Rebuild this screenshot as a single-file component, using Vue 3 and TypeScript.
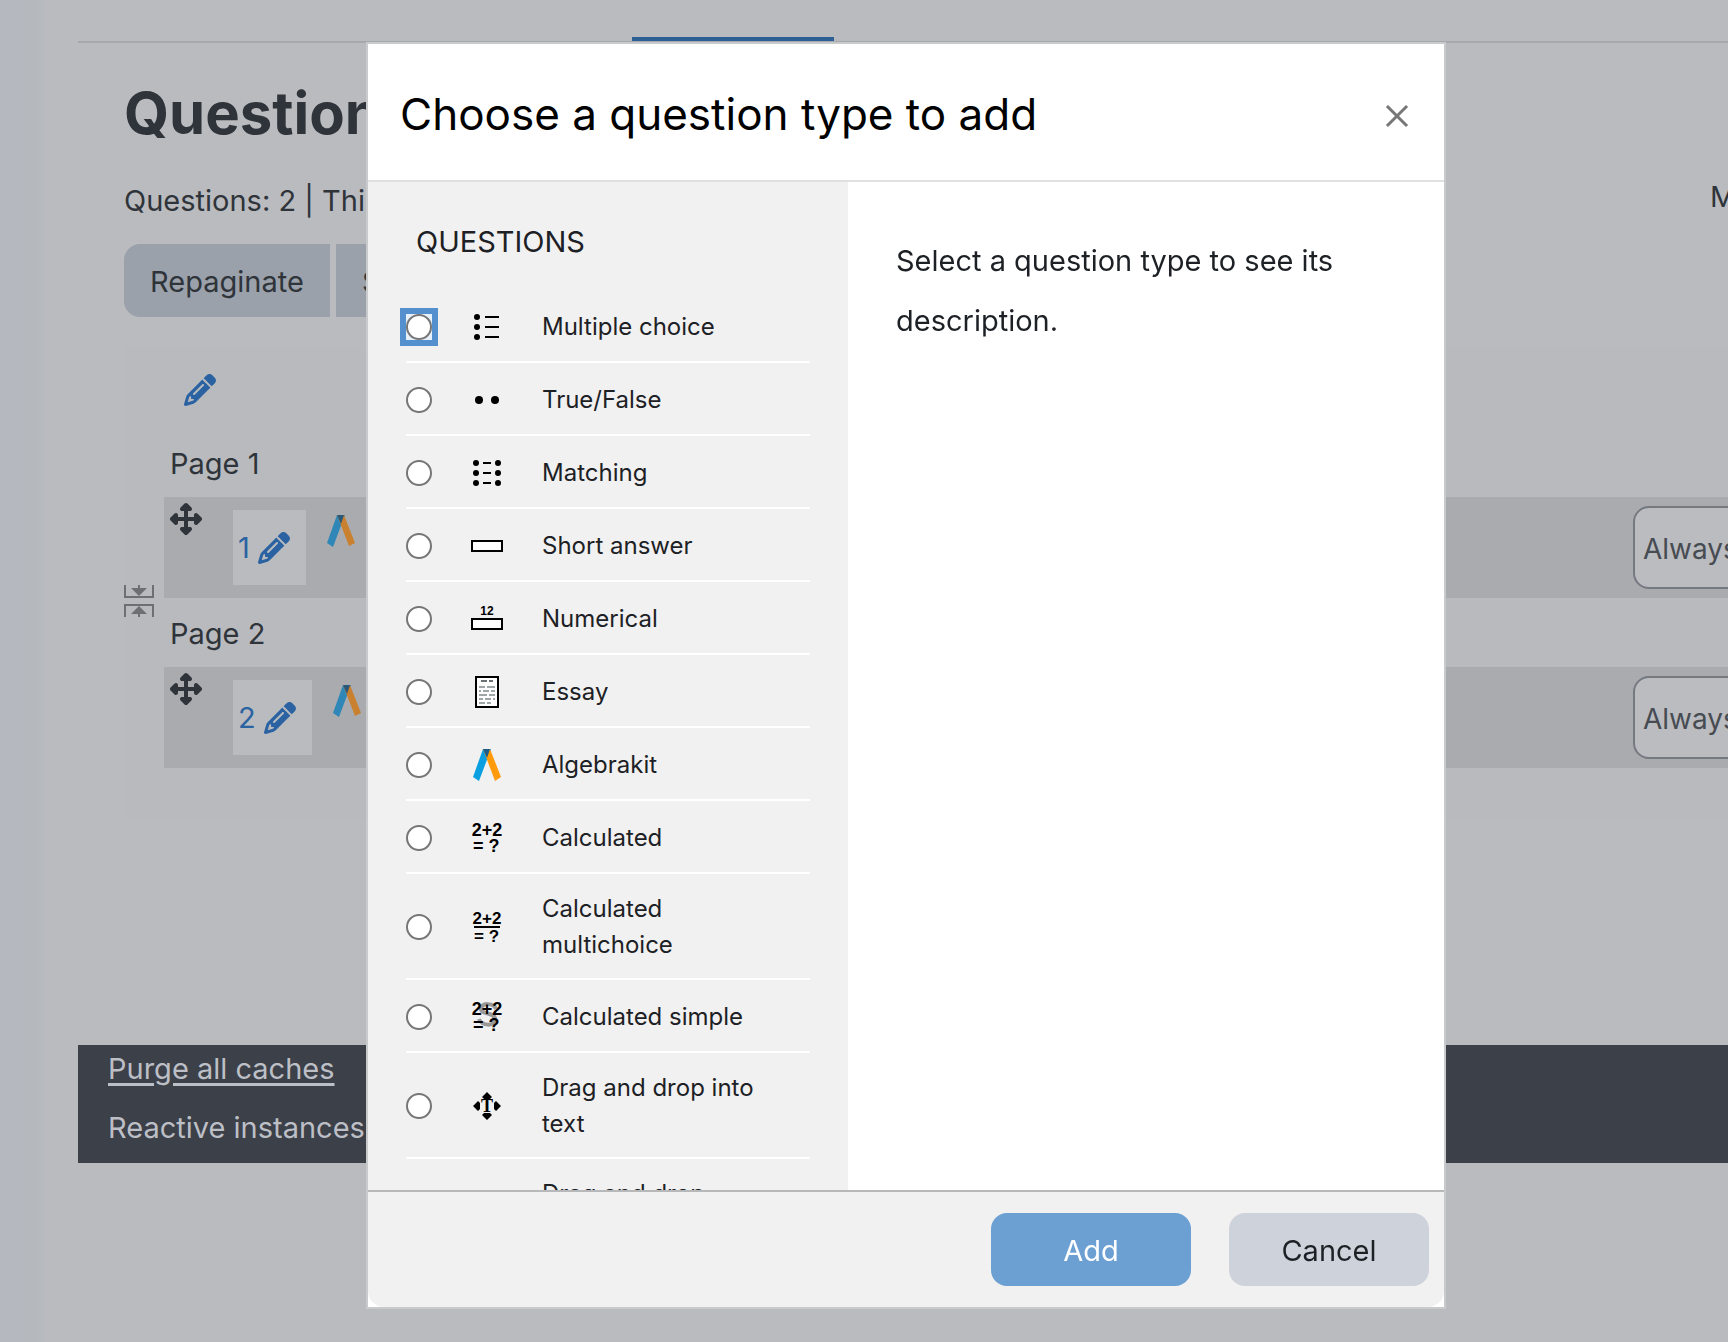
<script setup lang="ts">
import { ref } from 'vue'

interface QuestionType {
  id: string
  label: string
}

interface Slot {
  page: number
  canJoin: boolean
}

const types: QuestionType[] = [
  { id: 'multichoice', label: 'Multiple choice' },
  { id: 'truefalse', label: 'True/False' },
  { id: 'match', label: 'Matching' },
  { id: 'shortanswer', label: 'Short answer' },
  { id: 'numerical', label: 'Numerical' },
  { id: 'essay', label: 'Essay' },
  { id: 'algebrakit', label: 'Algebrakit' },
  { id: 'calculated', label: 'Calculated' },
  { id: 'calculatedmulti', label: 'Calculated multichoice' },
  { id: 'calculatedsimple', label: 'Calculated simple' },
  { id: 'ddwtos', label: 'Drag and drop into text' },
  { id: 'ddmarker', label: 'Drag and drop markers' },
]

const slots: Slot[] = [
  { page: 1, canJoin: true },
  { page: 2, canJoin: false },
]

const focused = ref('multichoice')
const chosen = ref('')

const pencil =
  'M410.3 231l11.3-11.3-33.9-33.9-62.1-62.1L291.7 89.8l-11.3 11.3-22.6 22.6L58.6 322.9c-10.4 10.4-18 23.3-22.2 37.4L1 480.7c-2.5 8.4-.2 17.5 6.1 23.7s15.3 8.5 23.7 6.1l120.3-35.4c14.1-4.2 27-11.8 37.4-22.2L387.7 253.7 410.3 231zM160 399.4l-9.1 22.7c-4 3.1-8.5 5.4-13.3 6.9L59.4 452l23-78.1c1.4-4.9 3.8-9.4 6.9-13.3l22.7-9.1v32c0 8.8 7.2 16 16 16h32zM362.7 18.7L348.3 33.2 325.7 55.8 314.3 67.1l33.9 33.9 62.1 62.1 33.9 33.9 11.3-11.3 22.6-22.6 14.5-14.5c25-25 25-65.5 0-90.5L453.3 18.7c-25-25-65.5-25-90.5 0zm-47.4 168l-144 144c-6.2 6.2-16.4 6.2-22.6 0s-6.2-16.4 0-22.6l144-144c6.2-6.2 16.4-6.2 22.6 0s6.2 16.4 0 22.6z'
const arrows =
  'M278.6 9.4c-12.5-12.5-32.8-12.5-45.3 0l-64 64c-9.2 9.2-11.9 22.9-6.9 34.9s16.6 19.8 29.6 19.8h32v96H128V192c0-12.9-7.8-24.6-19.8-29.6s-25.7-2.2-34.9 6.9l-64 64c-12.5 12.5-12.5 32.8 0 45.3l64 64c9.2 9.2 22.9 11.9 34.9 6.9s19.8-16.6 19.8-29.6V288h96v96H192c-12.9 0-24.6 7.8-29.6 19.8s-2.2 25.7 6.9 34.9l64 64c12.5 12.5 32.8 12.5 45.3 0l64-64c9.2-9.2 11.9-22.9 6.9-34.9s-16.6-19.8-29.6-19.8H288V288h96v32c0 12.9 7.8 24.6 19.8 29.6s25.7 2.2 34.9-6.9l64-64c12.5-12.5 12.5-32.8 0-45.3l-64-64c-9.2-9.2-22.9-11.9-34.9-6.9s-19.8 16.6-19.8 29.6v32H288V128h32c12.9 0 24.6-7.8 29.6-19.8s2.2-25.7-6.9-34.9l-64-64z'
</script>

<template>
  <div class="page">
    <aside class="edge"></aside>
    <div class="content">
      <nav class="tabs"><a class="tab" href="#questions" aria-label="Questions"></a></nav>

      <main class="quiz">
        <h2 class="title">Questions</h2>
        <div class="status">
          <span>Questions: 2 | This quiz is open</span>
          <span class="grade">Maximum</span>
        </div>
        <div class="actions">
          <button class="action first" type="button">Repaginate</button>
          <button class="action" type="button">Select</button>
        </div>

        <section class="structure">
          <a class="edit-heading" href="#heading" aria-label="Edit heading">
            <svg class="icon" viewBox="0 0 512 512"><path :d="pencil" /></svg>
          </a>
          <template v-for="slot in slots" :key="slot.page">
            <h4 class="page-name">Page {{ slot.page }}</h4>
            <div class="slot">
              <button v-if="slot.canJoin" class="join" type="button" aria-label="Remove page break">
                <svg width="30" height="32" viewBox="0 0 30 32" fill="none" stroke="#6d6f73" stroke-width="2">
                  <path d="M1 0v12h28V0M15 0v6M1 32V20h28v12M15 32v-6" />
                  <path d="M7 3h16l-8 8zM7 29h16l-8-8z" fill="#6d6f73" stroke="none" />
                </svg>
              </button>
              <div class="bar">
                <svg class="icon move" viewBox="0 0 512 512"><path :d="arrows" /></svg>
                <a class="number" :href="'#slot-' + slot.page">
                  {{ slot.page }}
                  <svg class="icon" viewBox="0 0 512 512"><path :d="pencil" /></svg>
                </a>
                <svg class="kit" width="28" height="32" viewBox="0 0 28 32">
                  <path d="M10 0h8L6 32 0 28z" fill="#2f87b8" />
                  <path d="M10 0h7l11 28-6 3z" fill="#c9812f" />
                  <path d="M10 0h7l-3 9z" fill="#2c5878" />
                </svg>
                <select class="version" :aria-label="'Version of question ' + slot.page">
                  <option>Always latest</option>
                </select>
              </div>
            </div>
          </template>
        </section>
      </main>

      <footer class="footer">
        <a href="#purge">Purge all caches</a>
        <span>Reactive instances</span>
      </footer>
    </div>

    <div class="overlay">
      <form class="modal" role="dialog" aria-labelledby="dialog-title" @submit.prevent>
        <header class="modal-head">
          <h1 id="dialog-title">Choose a question type to add</h1>
          <button class="close" type="button" aria-label="Close">
            <svg width="24" height="24" viewBox="0 0 24 24" stroke="#777" stroke-width="3" stroke-linecap="square">
              <path d="M3 3l18 18M21 3L3 21" />
            </svg>
          </button>
        </header>

        <div class="modal-body">
          <div class="choices">
            <h2 class="group">QUESTIONS</h2>
            <label v-for="t in types" :key="t.id" class="choice">
              <span class="radio" :class="{ focused: focused === t.id }">
                <input v-model="chosen" type="radio" name="qtype" :value="t.id" @focus="focused = t.id" />
              </span>
              <svg class="glyph" width="32" height="32" viewBox="0 0 32 32">
                <template v-if="t.id === 'multichoice'">
                  <circle v-for="y in [6, 16, 26]" :key="y" cx="6" :cy="y" r="3" />
                  <path d="M14 6h14M14 16h14M14 26h14" stroke="#000" stroke-width="2" />
                </template>
                <template v-else-if="t.id === 'truefalse'">
                  <circle cx="8" cy="16" r="4" />
                  <circle cx="24" cy="16" r="4" />
                </template>
                <template v-else-if="t.id === 'match'">
                  <template v-for="y in [6, 16, 26]" :key="y">
                    <circle cx="5" :cy="y" r="3" />
                    <circle cx="27" :cy="y" r="3" />
                  </template>
                  <path d="M12 6h8M12 16h8M12 26h8" stroke="#000" stroke-width="2" />
                </template>
                <rect v-else-if="t.id === 'shortanswer'" x="1" y="11" width="30" height="10" fill="#fff" stroke="#000" stroke-width="2" />
                <template v-else-if="t.id === 'numerical'">
                  <text x="16" y="12" font-size="12" text-anchor="middle">12</text>
                  <rect x="1" y="16" width="30" height="10" fill="#fff" stroke="#000" stroke-width="2" />
                </template>
                <template v-else-if="t.id === 'essay'">
                  <rect x="5" y="1" width="22" height="30" fill="#fff" stroke="#000" stroke-width="2" />
                  <path d="M10 5h6M18 5h4" stroke="#6b7072" stroke-width="2" />
                  <path
                    d="M8 11h6M16 11h8M8 15h2M12 15h6M20 15h4M8 19h8M18 19h6M8 23h4M14 23h6M22 23h2M8 27h6M16 27h4"
                    stroke="#9fa6a8"
                    stroke-width="2"
                  />
                </template>
                <template v-else-if="t.id === 'algebrakit'">
                  <path d="M12 0h8L8 32 2 28z" fill="#0a9fe0" />
                  <path d="M12 0h7l11 28-6 4z" fill="#ff9a0a" />
                  <path d="M12 0h7l-3 9z" fill="#1b5c8c" />
                </template>
                <template v-else-if="t.id === 'calculated'">
                  <text x="16" y="14" font-size="18" text-anchor="middle">2+2</text>
                  <text x="2" y="30" font-size="18">= ?</text>
                </template>
                <template v-else-if="t.id === 'calculatedmulti'">
                  <text x="16" y="13" font-size="17" text-anchor="middle">2+2</text>
                  <path d="M3 16h26" stroke="#000" stroke-width="2" />
                  <text x="3" y="31" font-size="17">= ?</text>
                </template>
                <template v-else-if="t.id === 'calculatedsimple'">
                  <path
                    d="M25 8c-2-6-15-7-15 0 0 6 14 3 14 10 0 8-14 7-16 0"
                    fill="none"
                    stroke="#999"
                    stroke-width="4"
                  />
                  <text x="16" y="14" font-size="18" text-anchor="middle">2+2</text>
                  <text x="2" y="30" font-size="18">= ?</text>
                </template>
                <template v-else>
                  <path d="M16 2l5 5-2 2h-6l-2-2zM16 30l5-5-2-2h-6l-2 2zM2 16l5-5 2 2v6l-2 2zM30 16l-5-5-2 2v6l2 2z" />
                  <text class="serif" x="16" y="22" font-size="18" text-anchor="middle">T</text>
                </template>
              </svg>
              <span class="label">{{ t.label }}</span>
            </label>
          </div>
          <p class="hint">Select a question type to see its description.</p>
        </div>

        <footer class="modal-foot">
          <button class="btn add" type="submit">Add</button>
          <button class="btn cancel" type="button">Cancel</button>
        </footer>
      </form>
    </div>
  </div>
</template>

<style>
body {
  margin: 0;
  background: #babbbf;
}
</style>

<style scoped>
* {
  box-sizing: border-box;
}
.page {
  display: flex;
  min-height: 100vh;
  overflow: hidden;
  background: #babbbf;
  color: #2f343a;
  font-family: Inter, "Liberation Sans", sans-serif;
  font-size: 29px;
  line-height: 44px;
}
button,
select,
input {
  margin: 0;
  font: inherit;
  color: inherit;
}
h1,
h2,
h4,
p {
  margin: 0;
  font-weight: 400;
}
.edge {
  flex: none;
  width: 46px;
  margin-right: 32px;
  background: linear-gradient(90deg, #b5b8be, #b5b9be 80%, #b8babf);
}
.content {
  flex: 1;
  min-width: 0;
  margin-right: -120px;
}
.tabs {
  display: flex;
  align-items: flex-end;
  height: 43px;
  padding-left: 554px;
  border-bottom: 2px solid #a6a8ac;
}
.tab {
  width: 202px;
  height: 4px;
  background: #2d6095;
}
.quiz {
  padding-left: 46px;
}
.title {
  padding-top: 36px;
  font-size: 58px;
  font-weight: 700;
  line-height: 68px;
}
.status {
  display: flex;
  justify-content: space-between;
  padding-top: 32px;
}
.grade {
  width: 138px;
  margin-top: -4px;
}
.actions {
  display: flex;
  gap: 6px;
  padding-top: 21px;
}
.action {
  height: 73px;
  padding: 2px 26px 0;
  border: 0;
  background: #9aa1aa;
}
.action.first {
  width: 206px;
  border-radius: 16px 0 0 16px;
}
.icon {
  flex: none;
  width: 32px;
  height: 32px;
  fill: currentColor;
}
.structure {
  height: 474px;
  margin-top: 29px;
  background: #b8babe;
}
.edit-heading {
  display: flex;
  padding: 28px 0 0 60px;
  color: #2b62a1;
}
.page-name {
  padding: 36px 0 11px 46px;
}
.slot + .page-name {
  padding-top: 14px;
}
.slot {
  display: flex;
  align-items: flex-end;
}
.join {
  display: flex;
  width: 30px;
  margin-right: -30px;
  margin-bottom: -19px;
  padding: 0;
  border: 0;
  background: none;
}
.bar {
  display: flex;
  flex: 1;
  align-items: flex-start;
  height: 101px;
  margin-left: 40px;
  padding-left: 6px;
  background: #a9abaf;
}
.move {
  margin: 6px 31px 0 0;
}
.number {
  display: flex;
  align-items: center;
  gap: 8px;
  height: 75px;
  margin-top: 13px;
  padding: 0 16px 0 5px;
  background: #b9bbbf;
  color: #2b62a1;
  text-decoration: none;
}
.kit {
  margin: 18px 0 0 21px;
}
.version {
  appearance: none;
  width: 215px;
  height: 83px;
  margin: 9px 0 0 auto;
  padding: 2px 8px 0;
  border: 2px solid #757a81;
  border-radius: 16px;
  background: #babcc0;
  color: #474b52;
  font-size: 28px;
}
.footer {
  display: flex;
  flex-direction: column;
  align-items: flex-start;
  gap: 15px;
  height: 118px;
  margin-top: 225px;
  padding: 2px 30px;
  background: #3c4048;
  color: #bcbfc6;
}
.footer a {
  color: inherit;
  text-underline-offset: 4px;
  text-decoration-thickness: 3px;
}

.overlay {
  position: fixed;
  inset: 0;
  display: flex;
  justify-content: center;
  padding: 42px 0 33px 84px;
}
.modal {
  display: flex;
  flex-direction: column;
  width: 1080px;
  max-width: 100%;
  border: 2px solid #c9cacc;
  background: #fff;
  color: #1d2125;
}
.modal-head {
  display: flex;
  align-items: center;
  justify-content: space-between;
  height: 138px;
  padding: 4px 35px 0 32px;
  border-bottom: 2px solid #dee0e2;
  color: #000;
}
.modal-head h1 {
  font-size: 44px;
  line-height: 56px;
}
.close {
  display: flex;
  margin-top: 4px;
  padding: 0;
  border: 0;
  background: none;
}
.modal-body {
  display: flex;
  flex: 1;
  min-height: 0;
}
.choices {
  flex: none;
  width: 480px;
  padding: 38px 38px 0;
  overflow-y: auto;
  scrollbar-width: none;
  background: #f1f1f1;
}
.group {
  padding: 0 10px;
  margin-bottom: 26px;
  font-size: 29px;
  line-height: 44px;
}
.choice {
  display: flex;
  align-items: center;
  gap: 39px;
  min-height: 73px;
  padding: 17px 38px 15px 0;
  border-bottom: 2px solid #fff;
  font-size: 24px;
  line-height: 36px;
}
.radio {
  display: flex;
  flex: none;
}
.radio.focused {
  background: #e6f1fb;
  box-shadow: 0 0 0 6px #5590ce;
}
.radio input {
  appearance: none;
  width: 26px;
  height: 26px;
  border: 2px solid #767676;
  border-radius: 50%;
  outline: 0;
  background: #fff;
}
.radio input:checked {
  background: radial-gradient(#0075ff 50%, #fff 55%);
}
.glyph {
  flex: none;
  font-family: "Liberation Sans", sans-serif;
  font-weight: 700;
}
.serif {
  font-family: "Liberation Serif", serif;
}
.hint {
  flex: 1;
  padding: 49px 96px 0 48px;
  line-height: 60px;
}
.modal-foot {
  display: flex;
  justify-content: flex-end;
  gap: 38px;
  height: 117px;
  padding: 21px 15px 0;
  border-top: 2px solid #b7b8ba;
  border-radius: 0 0 16px 16px;
  background: #f1f1f1;
}
.btn {
  width: 200px;
  height: 73px;
  padding: 2px 0 0;
  border: 0;
  border-radius: 16px;
}
.add {
  background: #6c9fd2;
  color: #fff;
}
.cancel {
  background: #ced2da;
}
</style>
